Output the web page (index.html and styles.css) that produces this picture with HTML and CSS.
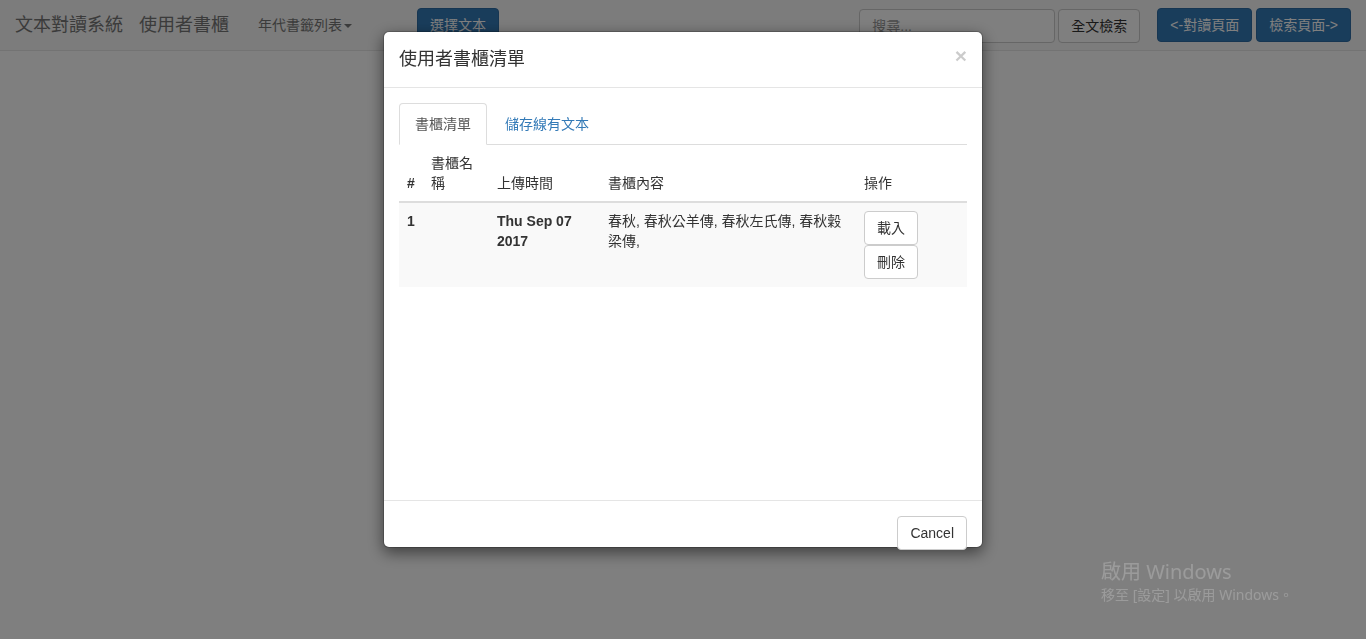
FILE: index.html
```html
<!DOCTYPE html>
<html lang="zh-Hant">
<head>
<meta charset="utf-8">
<title>文本對讀系統</title>
<link rel="stylesheet" href="styles.css">
</head>
<body>
<nav class="navbar">
  <div class="brand">文本對讀系統</div>
  <div class="brand brand2">使用者書櫃</div>
  <div class="navlink">年代書籤列表<span class="caret"></span></div>
  <button class="btn btn-primary btn-choose">選擇文本</button>
  <input class="search" type="text" placeholder="搜尋...">
  <button class="btn btn-default btn-full">全文檢索</button>
  <button class="btn btn-primary btn-read">&lt;-對讀頁面</button>
  <button class="btn btn-primary btn-search">檢索頁面-&gt;</button>
</nav>

<div class="backdrop"></div>

<div class="modal">
  <div class="modal-dialog">
    <div class="modal-content">
      <div class="modal-header">
        <span class="close">&times;</span>
        <h4 class="modal-title">使用者書櫃清單</h4>
      </div>
      <div class="modal-body">
        <ul class="nav-tabs">
          <li class="tab active">書櫃清單</li>
          <li class="tab">儲存線有文本</li>
        </ul>
        <table class="table">
          <thead>
            <tr>
              <th class="c-num"><b>#</b></th>
              <th class="c-name">書櫃名稱</th>
              <th class="c-time">上傳時間</th>
              <th class="c-content">書櫃內容</th>
              <th class="c-op">操作</th>
            </tr>
          </thead>
          <tbody>
            <tr>
              <td class="bold">1</td>
              <td></td>
              <td class="bold">Thu Sep 07 2017</td>
              <td>春秋, 春秋公羊傳, 春秋左氏傳, 春秋穀梁傳,</td>
              <td>
                <div class="ops">
                  <button class="btn btn-default">載入</button>
                  <button class="btn btn-default">刪除</button>
                </div>
              </td>
            </tr>
          </tbody>
        </table>
      </div>
      <div class="modal-footer">
        <button class="btn btn-default">Cancel</button>
      </div>
    </div>
  </div>
</div>

<div class="activate">
  <div class="act-title">啟用 Windows</div>
  <div class="act-sub">移至 [設定] 以啟用 Windows。</div>
</div>
</body>
</html>
```

FILE: styles.css
```css
* { box-sizing: border-box; }

html, body {
  margin: 0;
  padding: 0;
  height: 100%;
  overflow: hidden;
}

body {
  font-family: "Liberation Sans", "Noto Sans CJK TC", sans-serif;
  font-size: 14px;
  line-height: 20px;
  color: #333;
  background: #fff;
}

/* ---------- navbar ---------- */
.navbar {
  display: flex;
  align-items: flex-start;
  height: 51px;
  padding: 0 15px;
  background: #f8f8f8;
  border-bottom: 1px solid #e7e7e7;
}

.brand {
  font-size: 18px;
  line-height: 20px;
  padding: 15px 0;
  color: #777;
}

.brand2 { margin-left: 16px; }

.navlink {
  margin-left: 29px;
  padding: 15px 0;
  color: #777;
  font-size: 14px;
}

.caret {
  display: inline-block;
  width: 0;
  height: 0;
  margin-left: 2px;
  vertical-align: middle;
  border-top: 4px solid;
  border-left: 4px solid transparent;
  border-right: 4px solid transparent;
}

.btn {
  display: inline-block;
  height: 34px;
  padding: 6px 12px;
  font-family: inherit;
  font-size: 14px;
  line-height: 20px;
  border: 1px solid transparent;
  border-radius: 4px;
  white-space: nowrap;
  cursor: pointer;
}

.btn-default {
  color: #333;
  background: #fff;
  border-color: #ccc;
}

.btn-primary {
  color: #fff;
  background: #337ab7;
  border-color: #2e6da4;
}

.btn-choose { margin: 8px 0 0 65px; }

.search {
  margin: 9px 0 0 auto;
  width: 196px;
  height: 34px;
  padding: 6px 12px;
  font-family: inherit;
  font-size: 14px;
  line-height: 20px;
  color: #555;
  background: #fff;
  border: 1px solid #ccc;
  border-radius: 4px;
}

.search::placeholder { color: #999; }

.btn-full { margin: 9px 0 0 3px; }
.btn-read { margin: 8px 0 0 17px; }
.btn-search { margin: 8px 0 0 4px; }

/* ---------- overlay ---------- */
.backdrop {
  position: fixed;
  inset: 0;
  background: rgba(0, 0, 0, 0.5);
}

.modal {
  position: fixed;
  inset: 0;
}

.modal-dialog {
  width: 600px;
  margin: 31px auto 0;
}

.modal-content {
  height: 517px;
  background: #fff;
  background-clip: padding-box;
  border: 1px solid rgba(0, 0, 0, 0.2);
  border-radius: 6px;
  box-shadow: 0 5px 15px rgba(0, 0, 0, 0.5);
  display: flex;
  flex-direction: column;
}

.modal-header {
  flex-shrink: 0;
  padding: 15px;
  border-bottom: 1px solid #e5e5e5;
}

.modal-title {
  margin: 0;
  font-size: 18px;
  font-weight: normal;
  line-height: 25px;
  color: #333;
}

.close {
  float: right;
  margin-top: -2px;
  font-size: 21px;
  font-weight: bold;
  line-height: 1;
  color: #000;
  opacity: 0.2;
}

.modal-body {
  flex-shrink: 0;
  height: 412px;
  padding: 15px;
}

.nav-tabs {
  display: flex;
  margin: 0;
  padding: 0;
  list-style: none;
  border-bottom: 1px solid #ddd;
}

.tab {
  margin: 0 2px -1px 0;
  padding: 10px 15px;
  line-height: 20px;
  color: #337ab7;
  border: 1px solid transparent;
  border-radius: 4px 4px 0 0;
}

.tab.active {
  color: #555;
  background: #fff;
  border-color: #ddd;
  border-bottom-color: transparent;
}

.table {
  width: 100%;
  table-layout: fixed;
  border-collapse: collapse;
  border-spacing: 0;
}

.table th,
.table td {
  padding: 8px;
  line-height: 20px;
  text-align: left;
}

.table th {
  font-weight: normal;
  vertical-align: bottom;
  border-bottom: 2px solid #ddd;
}

.table td {
  vertical-align: top;
  border-top: 1px solid #ddd;
}

.table tbody tr:nth-child(odd) { background: #f9f9f9; }

.c-num { width: 24px; }
.c-name { width: 66px; }
.c-time { width: 111px; }
.c-content { width: 256px; }
.c-op { width: 111px; }

.bold { font-weight: bold; }

.ops {
  display: flex;
  flex-direction: column;
  align-items: flex-start;
}

.modal-footer {
  flex: 1 1 auto;
  min-height: 0;
  padding: 15px;
  text-align: right;
  border-top: 1px solid #e5e5e5;
}

/* ---------- watermark ---------- */
.activate {
  position: fixed;
  left: 1101px;
  top: 559px;
  color: rgba(255, 255, 255, 0.22);
  font-family: "Noto Sans", "Noto Sans CJK TC", sans-serif;
}

.act-title {
  font-size: 20px;
  line-height: 26px;
}

.act-sub {
  font-size: 14px;
  line-height: 20px;
}
```
